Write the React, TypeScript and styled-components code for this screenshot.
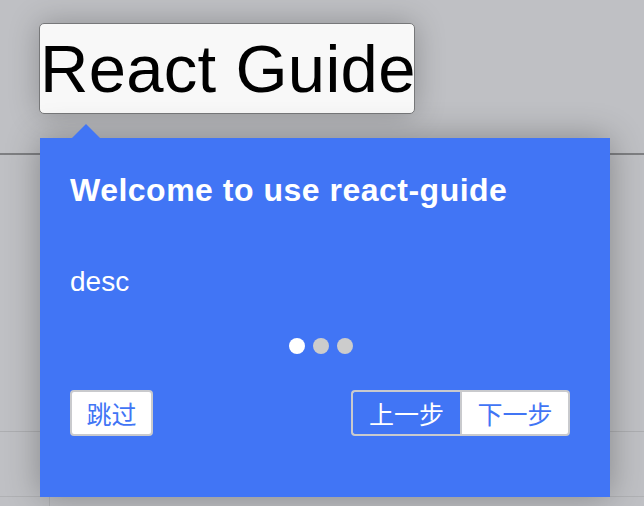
import React from "react";
import styled, { createGlobalStyle } from "styled-components";

const Global = createGlobalStyle`
  html, body { margin: 0; padding: 0; }
  body { font-family: "Liberation Sans", Arial, sans-serif; background: #bfc0c4; }
`;

const Page = styled.div`
  position: relative;
  width: 644px;
  height: 506px;
  overflow: hidden;
  background: #bfc0c4;
`;

const Header = styled.header`
  height: 155px;
  box-sizing: border-box;
  padding: 23px 0 0 39px;
  border-bottom: 2px solid #7e7f82;
`;

const HighlightBox = styled.div`
  display: inline-flex;
  align-items: center;
  box-sizing: border-box;
  height: 91px;
  width: 376px;
  background: #f8f8f8;
  border: 1px solid #77787a;
  border-radius: 5px;
  box-shadow: 0 0 30px rgba(0, 0, 0, 0.25);
  font-family: "Liberation Sans", Arial, sans-serif;
  font-size: 67px;
  line-height: 1;
  color: #000;
  letter-spacing: 0.3px;
  white-space: nowrap;
`;

const Band = styled.section<{ $h: number; $line: string }>`
  height: ${(p) => p.$h}px;
  border-bottom: 1px solid ${(p) => p.$line};
`;

const FooterRow = styled.div`
  display: grid;
  grid-template-columns: 50px 1fr;
  height: 20px;
`;

const FooterCell = styled.div`
  border-right: 1px solid #b0b1b4;
`;

const Popover = styled.div`
  position: absolute;
  left: 40px;
  top: 138px;
  width: 570px;
  height: 359px;
  box-sizing: border-box;
  padding: 36px 40px 0 30px;
  background: #4175f5;
  box-shadow: 0 0 32px rgba(0, 0, 0, 0.3);
  display: flex;
  flex-direction: column;
  color: #fff;
`;

const Arrow = styled.span`
  position: absolute;
  left: 32px;
  top: -14px;
  width: 0;
  height: 0;
  border-left: 14px solid transparent;
  border-right: 14px solid transparent;
  border-bottom: 14px solid #4175f5;
`;

const Title = styled.h2`
  margin: 0;
  font-family: "Liberation Sans", Arial, sans-serif;
  font-weight: 700;
  font-size: 32px;
  line-height: 32px;
  letter-spacing: 0.5px;
  white-space: nowrap;
`;

const Desc = styled.p`
  margin: 62px 0 0 0;
  font-family: "Liberation Sans", Arial, sans-serif;
  font-size: 28px;
  line-height: 27px;
`;

const Dots = styled.div`
  display: flex;
  justify-content: center;
  margin-top: 43px;
  padding-left: 10px;
`;

const Dot = styled.span<{ $active?: boolean }>`
  width: 16px;
  height: 16px;
  border-radius: 50%;
  margin-right: 8px;
  background: ${(p) => (p.$active ? "#ffffff" : "#cccccc")};
`;

const Actions = styled.div`
  display: flex;
  justify-content: space-between;
  align-items: center;
  margin-top: 36px;
`;

const Btn = styled.button<{ $filled?: boolean }>`
  box-sizing: border-box;
  height: 46px;
  padding: 0 15px;
  border: 2px solid #c9cacd;
  border-radius: 4px;
  background: ${(p) => (p.$filled ? "#ffffff" : "transparent")};
  color: ${(p) => (p.$filled ? "#4175f5" : "#ffffff")};
  font-family: "Noto Sans CJK SC", "Liberation Sans", sans-serif;
  font-size: 25px;
  line-height: 1;
  cursor: pointer;
`;

const SkipBtn = styled(Btn)`
  width: 83px;
  padding: 0;
`;

const Group = styled.div`
  display: flex;
  & > ${Btn} {
    width: 110px;
    padding: 0;
  }
  & > ${Btn}:first-child {
    width: 109px;
    border-top-right-radius: 0;
    border-bottom-right-radius: 0;
    border-right: none;
  }
  & > ${Btn}:last-child {
    border-top-left-radius: 0;
    border-bottom-left-radius: 0;
  }
`;

export default function App() {
  return (
    <>
      <Global />
      <Page>
        <Header>
          <HighlightBox>React Guide</HighlightBox>
        </Header>
        <Band $h={276} $line="#adaeb1" />
        <Band $h={64} $line="#b0b1b4" />
        <FooterRow>
          <FooterCell />
          <div />
        </FooterRow>
        <Popover>
          <Arrow />
          <Title>Welcome to use react-guide</Title>
          <Desc>desc</Desc>
          <Dots>
            <Dot $active />
            <Dot />
            <Dot />
          </Dots>
          <Actions>
            <SkipBtn $filled>跳过</SkipBtn>
            <Group>
              <Btn>上一步</Btn>
              <Btn $filled>下一步</Btn>
            </Group>
          </Actions>
        </Popover>
      </Page>
    </>
  );
}
